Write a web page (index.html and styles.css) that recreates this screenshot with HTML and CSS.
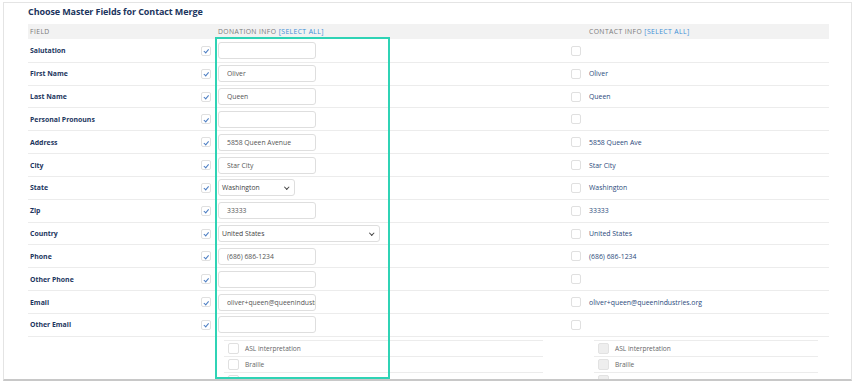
FILE: index.html
```html
<!DOCTYPE html>
<html>
<head>
  <title>Choose Master Fields for Contact Merge</title>
  <link rel="stylesheet" href="styles.css">
</head>
<body>
  <div class="frame">
    <h2 class="title">Choose Master Fields for Contact Merge</h2>

    <div class="merge">
      <div class="row head">
        <div class="h-cell">Field</div>
        <div></div>
        <div class="h-cell">Donation Info <a href="#">[Select All]</a></div>
        <div></div>
        <div class="h-cell">Contact Info <a href="#">[Select All]</a></div>
      </div>

      <div class="row">
        <div class="c-field">Salutation</div>
        <div class="c-chk"><span class="box on"></span></div>
        <div class="c-don"><input class="txt" type="text" value=""></div>
        <div class="c-chk"><span class="box"></span></div>
        <div class="c-con"></div>
      </div>
      <div class="row">
        <div class="c-field">First Name</div>
        <div class="c-chk"><span class="box on"></span></div>
        <div class="c-don"><input class="txt" type="text" value="Oliver"></div>
        <div class="c-chk"><span class="box"></span></div>
        <div class="c-con">Oliver</div>
      </div>
      <div class="row">
        <div class="c-field">Last Name</div>
        <div class="c-chk"><span class="box on"></span></div>
        <div class="c-don"><input class="txt" type="text" value="Queen"></div>
        <div class="c-chk"><span class="box"></span></div>
        <div class="c-con">Queen</div>
      </div>
      <div class="row">
        <div class="c-field">Personal Pronouns</div>
        <div class="c-chk"><span class="box on"></span></div>
        <div class="c-don"><input class="txt" type="text" value=""></div>
        <div class="c-chk"><span class="box"></span></div>
        <div class="c-con"></div>
      </div>
      <div class="row">
        <div class="c-field">Address</div>
        <div class="c-chk"><span class="box on"></span></div>
        <div class="c-don"><input class="txt" type="text" value="5858 Queen Avenue"></div>
        <div class="c-chk"><span class="box"></span></div>
        <div class="c-con">5858 Queen Ave</div>
      </div>
      <div class="row">
        <div class="c-field">City</div>
        <div class="c-chk"><span class="box on"></span></div>
        <div class="c-don"><input class="txt" type="text" value="Star City"></div>
        <div class="c-chk"><span class="box"></span></div>
        <div class="c-con">Star City</div>
      </div>
      <div class="row">
        <div class="c-field">State</div>
        <div class="c-chk"><span class="box on"></span></div>
        <div class="c-don"><div class="sel state">Washington<span class="caret"></span></div></div>
        <div class="c-chk"><span class="box"></span></div>
        <div class="c-con">Washington</div>
      </div>
      <div class="row">
        <div class="c-field">Zip</div>
        <div class="c-chk"><span class="box on"></span></div>
        <div class="c-don"><input class="txt" type="text" value="33333"></div>
        <div class="c-chk"><span class="box"></span></div>
        <div class="c-con">33333</div>
      </div>
      <div class="row">
        <div class="c-field">Country</div>
        <div class="c-chk"><span class="box on"></span></div>
        <div class="c-don"><div class="sel country">United States<span class="caret"></span></div></div>
        <div class="c-chk"><span class="box"></span></div>
        <div class="c-con">United States</div>
      </div>
      <div class="row">
        <div class="c-field">Phone</div>
        <div class="c-chk"><span class="box on"></span></div>
        <div class="c-don"><input class="txt" type="text" value="(686) 686-1234"></div>
        <div class="c-chk"><span class="box"></span></div>
        <div class="c-con">(686) 686-1234</div>
      </div>
      <div class="row">
        <div class="c-field">Other Phone</div>
        <div class="c-chk"><span class="box on"></span></div>
        <div class="c-don"><input class="txt" type="text" value=""></div>
        <div class="c-chk"><span class="box"></span></div>
        <div class="c-con"></div>
      </div>
      <div class="row">
        <div class="c-field">Email</div>
        <div class="c-chk"><span class="box on"></span></div>
        <div class="c-don"><input class="txt" type="text" value="oliver+queen@queenindustries.org"></div>
        <div class="c-chk"><span class="box"></span></div>
        <div class="c-con">oliver+queen@queenindustries.org</div>
      </div>
      <div class="row">
        <div class="c-field">Other Email</div>
        <div class="c-chk"><span class="box on"></span></div>
        <div class="c-don"><input class="txt" type="text" value=""></div>
        <div class="c-chk"><span class="box"></span></div>
        <div class="c-con"></div>
      </div>

      <div class="row extra">
        <div></div>
        <div></div>
        <div class="c-don">
          <ul class="opts">
            <li><span class="box"></span>ASL interpretation</li>
            <li><span class="box"></span>Braille</li>
            <li><span class="box"></span></li>
          </ul>
        </div>
        <div></div>
        <div class="c-con">
          <ul class="opts off">
            <li><span class="box"></span>ASL interpretation</li>
            <li><span class="box"></span>Braille</li>
            <li><span class="box"></span></li>
          </ul>
        </div>
      </div>
    </div>

    <!-- highlight drawn over the donation column -->
    <div class="mark"></div>
  </div>
</body>
</html>
```

FILE: styles.css
```css
body {
  margin: 0;
  padding: 0;
  background-color: #ffffff;
  font-family: 'Open Sans', 'Noto Sans', sans-serif;
  overflow: hidden;
}

.frame {
  position: relative;
  margin: 2px 3px 0 3px;
  height: 376px;
  border: 1px solid #e4e4e4;
  border-bottom: 2px solid #c8c8c8;
  padding: 0 22px 0 24px;
  overflow: hidden;
  background-color: #ffffff;
}

.title {
  margin: 0;
  padding-top: 2px;
  height: 19px;
  font-size: 9px;
  font-weight: 700;
  color: #1c355e;
  letter-spacing: -0.1px;
}

.row {
  display: grid;
  grid-template-columns: 169px 18px 352px 19px 1fr;
  align-items: center;
  height: 22.83px;
  box-sizing: border-box;
  border-bottom: 1px solid #ececec;
}

.row.head {
  height: 14.5px;
  margin-bottom: 1.5px;
  background-color: #f2f2f2;
  border-bottom: none;
}

.h-cell {
  padding-left: 3px;
  font-size: 6.8px;
  text-transform: uppercase;
  letter-spacing: 0.4px;
  color: #7a7a7a;
  white-space: nowrap;
}

.h-cell:first-child {
  padding-left: 2px;
}

.h-cell a {
  color: #3d8fd6;
  text-decoration: none;
}

.c-field {
  padding-left: 2px;
  font-size: 6.9px;
  font-weight: 700;
  color: #1c355e;
}

.c-chk {
  display: flex;
  padding-left: 4px;
}

.c-don {
  padding-left: 3px;
  display: flex;
}

.c-con {
  padding-left: 3px;
  font-size: 6.9px;
  color: #2b4a7c;
}

.box {
  display: inline-block;
  position: relative;
  width: 8px;
  height: 8px;
  border: 1px solid #e0e0e0;
  border-radius: 2px;
  background-color: #ffffff;
}

.box.on::after {
  content: "";
  position: absolute;
  left: 3px;
  top: 1.5px;
  width: 1.5px;
  height: 3.5px;
  border: solid #4a7cc2;
  border-width: 0 1px 1px 0;
  transform: rotate(40deg);
}

.txt {
  width: 98px;
  height: 17px;
  box-sizing: border-box;
  margin: 0;
  padding: 0 0 0 8px;
  border: 1px solid #dedede;
  border-radius: 3px;
  font-family: inherit;
  font-size: 6.8px;
  color: #555555;
  outline: none;
}

.sel {
  position: relative;
  height: 17px;
  box-sizing: border-box;
  padding-left: 3px;
  border: 1px solid #dedede;
  border-radius: 3px;
  font-size: 6.8px;
  line-height: 15px;
  color: #444444;
}

.sel.state {
  width: 77px;
}

.sel.country {
  width: 162px;
}

.caret {
  position: absolute;
  right: 6px;
  top: 5px;
  width: 2.5px;
  height: 2.5px;
  border: solid #444444;
  border-width: 0 1px 1px 0;
  transform: rotate(45deg);
}

.row.extra {
  height: auto;
  border-bottom: none;
  align-items: start;
  padding-top: 3px;
}

.opts {
  list-style: none;
  margin: 0 0 0 6px;
  padding: 0;
  width: 319px;
  border-top: 1px solid #ececec;
}

.c-con .opts {
  margin-left: 5px;
  width: 224px;
}

.opts li {
  display: flex;
  align-items: center;
  height: 16px;
  box-sizing: border-box;
  border-bottom: 1px solid #ececec;
  padding-left: 4px;
  font-size: 6.6px;
  color: #666666;
}

.opts .box {
  width: 9px;
  height: 9px;
  margin-right: 6px;
}

.opts.off .box {
  background-color: #eeeeee;
  border-color: #e2e2e2;
}

.mark {
  position: absolute;
  left: 211px;
  top: 34px;
  width: 171px;
  height: 338px;
  border: 2.5px solid #2fd3b5;
}
```
